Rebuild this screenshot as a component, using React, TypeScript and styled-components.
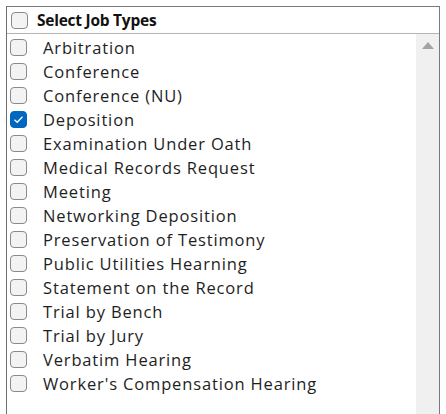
import React, { useState } from "react";
import styled, { createGlobalStyle } from "styled-components";

const GlobalStyle = createGlobalStyle`
  html, body {
    margin: 0;
    padding: 0;
    background: #ffffff;
  }
`;

const jobTypes = [
  "Arbitration",
  "Conference",
  "Conference (NU)",
  "Deposition",
  "Examination Under Oath",
  "Medical Records Request",
  "Meeting",
  "Networking Deposition",
  "Preservation of Testimony",
  "Public Utilities Hearning",
  "Statement on the Record",
  "Trial by Bench",
  "Trial by Jury",
  "Verbatim Hearing",
  "Worker's Compensation Hearing",
];

const Page = styled.div`
  padding: 6px 0 0 6px;
  width: 446px;
  height: 414px;
  box-sizing: border-box;
  overflow: hidden;
`;

const Panel = styled.div`
  width: 432px;
  height: 420px;
  border: 1px solid #7a7a7a;
  border-left-color: #6e6e6e;
  display: flex;
  flex-direction: column;
  background: #ffffff;
`;

const Header = styled.div`
  height: 26px;
  display: flex;
  align-items: center;
  gap: 9px;
  padding-left: 4px;
  border-bottom: 1px solid #b4b4b4;
  font-family: "Open Sans", sans-serif;
  font-weight: 700;
  font-size: 15.5px;
  letter-spacing: -0.25px;
  color: #111111;
`;

const Body = styled.div`
  flex: 1;
  display: flex;
`;

const List = styled.div`
  flex: 1;
  display: flex;
  flex-direction: column;
  padding-top: 1px;
`;

const Row = styled.label`
  height: 24px;
  display: flex;
  align-items: center;
  gap: 16px;
  padding-left: 3px;
  font-family: "Open Sans", sans-serif;
  font-size: 16.5px;
  letter-spacing: 0.85px;
  color: #1e1e1e;
  cursor: default;
`;

const Box = styled.span<{ $checked: boolean }>`
  width: 17px;
  height: 17px;
  box-sizing: border-box;
  border-radius: 4px;
  border: 1px solid ${(p) => (p.$checked ? "#0067c0" : "#8a8a8a")};
  background: ${(p) => (p.$checked ? "#0067c0" : "#f3f3f3")};
  display: flex;
  align-items: center;
  justify-content: center;
  flex-shrink: 0;
`;

const ScrollTrack = styled.div`
  width: 23px;
  background: #f0f0f0;
  display: flex;
  justify-content: center;
  padding-top: 8px;
`;

const Arrow = styled.div`
  width: 0;
  height: 0;
  border-left: 6px solid transparent;
  border-right: 6px solid transparent;
  border-bottom: 7px solid #a3a3a3;
`;

function CheckBox({ checked }: { checked: boolean }) {
  return (
    <Box $checked={checked}>
      {checked && (
        <svg width="11" height="9" viewBox="0 0 11 9">
          <path d="M1.5 4.8 L4.2 7.3 L9.5 1.8" fill="none" stroke="#ffffff" strokeWidth="1.3" />
        </svg>
      )}
    </Box>
  );
}

export default function App() {
  const [checked, setChecked] = useState<Record<string, boolean>>({ Deposition: true });
  const toggle = (name: string) => setChecked((c) => ({ ...c, [name]: !c[name] }));

  return (
    <>
      <GlobalStyle />
      <Page>
        <Panel>
          <Header>
            <CheckBox checked={false} />
            Select Job Types
          </Header>
          <Body>
            <List>
              {jobTypes.map((name) => (
                <Row key={name} onClick={() => toggle(name)}>
                  <CheckBox checked={!!checked[name]} />
                  {name}
                </Row>
              ))}
            </List>
            <ScrollTrack>
              <Arrow />
            </ScrollTrack>
          </Body>
        </Panel>
      </Page>
    </>
  );
}
